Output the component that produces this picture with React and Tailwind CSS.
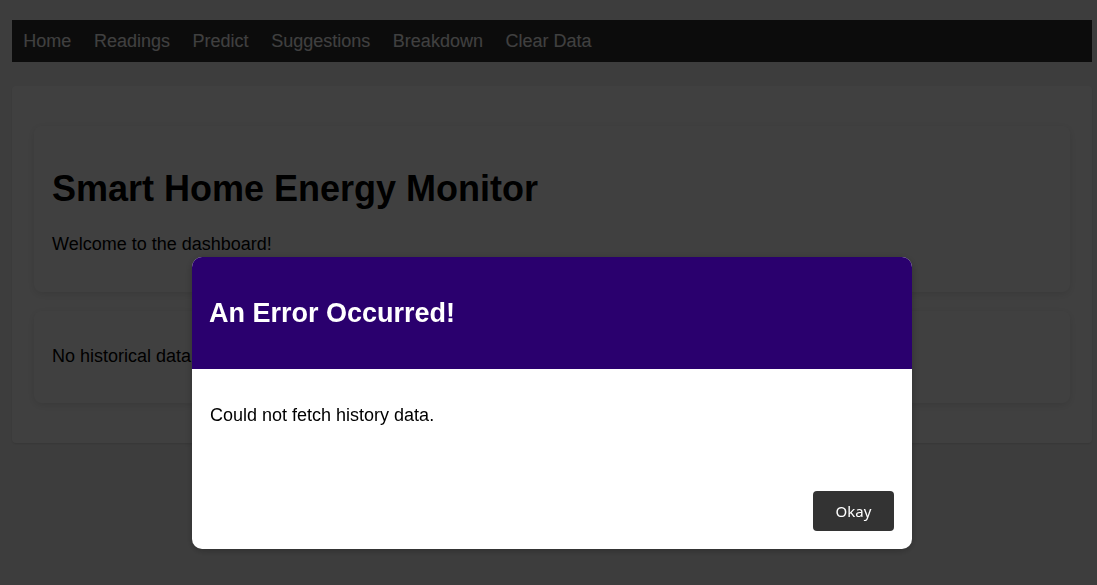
export default function App() {
  const links = ["Home", "Readings", "Predict", "Suggestions", "Breakdown", "Clear Data"]

  return (
    <div className="min-h-[585px] bg-[#f4f4f4] pt-[20px] pr-[5px] pl-[12px] font-['Liberation_Sans',Arial,sans-serif] text-black">
      <nav className="flex h-[42px] items-center bg-[#333]">
        {links.map((l) => (
          <a key={l} href="#" className="px-[11.3px] text-[18px] text-white">
            {l}
          </a>
        ))}
      </nav>

      <main className="mt-[24px] rounded-[4px] bg-white px-[22px] py-[40px] shadow-sm">
        <div className="rounded-[8px] bg-white px-[18px] pt-[42px] pb-[38px] shadow-[0_2px_8px_rgba(0,0,0,0.12)]">
          <h1 className="text-[36px] leading-[41px] font-bold">Smart Home Energy Monitor</h1>
          <p className="mt-[25px] text-[18px] leading-[20px]">Welcome to the dashboard!</p>
        </div>
        <div className="mt-[19px] rounded-[8px] bg-white px-[18px] pt-[35px] pb-[37px] shadow-[0_2px_8px_rgba(0,0,0,0.12)]">
          <p className="text-[18px] leading-[20px]">No historical data available.</p>
        </div>
      </main>

      <div className="fixed inset-0 bg-black/75" />

      <div className="fixed top-[257px] left-[192px] flex h-[292px] w-[720px] flex-col overflow-hidden rounded-[10px] bg-white shadow-[0_2px_8px_rgba(0,0,0,0.26)]">
        <header className="flex h-[112px] items-center bg-[#2a006e] px-[17px]">
          <h2 className="text-[27px] leading-[31px] font-bold text-white">An Error Occurred!</h2>
        </header>
        <div className="px-[18px] pt-[36px]">
          <p className="text-[18px] leading-[21px]">Could not fetch history data.</p>
        </div>
        <footer className="mt-auto flex justify-end px-[18px] pb-[18px]">
          <button className="h-[40px] w-[81px] rounded-[4px] bg-[#333] font-['Noto_Sans',sans-serif] text-[15px] text-white">
            Okay
          </button>
        </footer>
      </div>
    </div>
  )
}
